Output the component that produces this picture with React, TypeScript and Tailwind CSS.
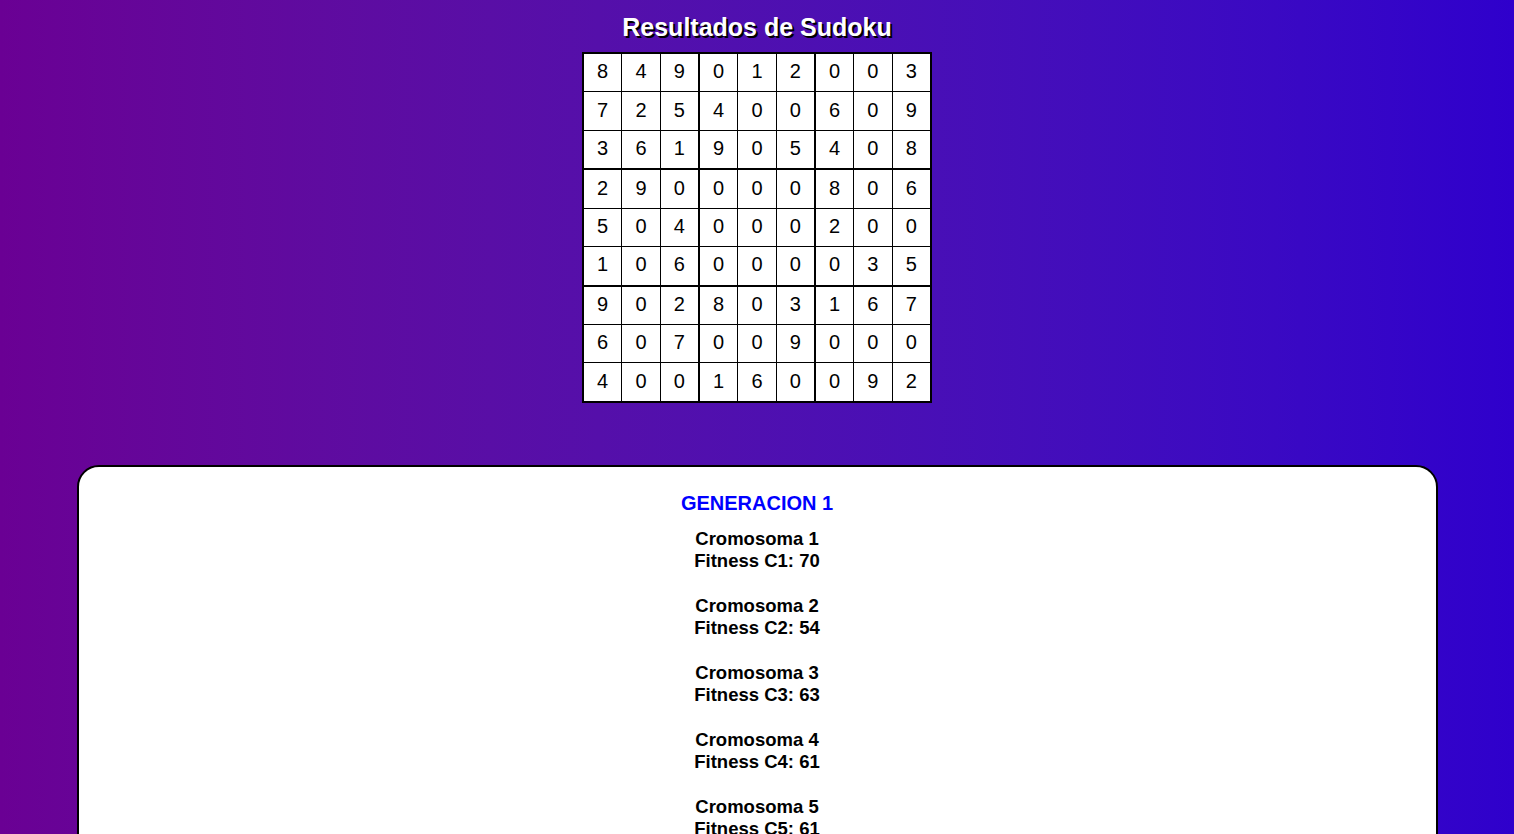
const board: number[][] = [
  [8, 4, 9, 0, 1, 2, 0, 0, 3],
  [7, 2, 5, 4, 0, 0, 6, 0, 9],
  [3, 6, 1, 9, 0, 5, 4, 0, 8],
  [2, 9, 0, 0, 0, 0, 8, 0, 6],
  [5, 0, 4, 0, 0, 0, 2, 0, 0],
  [1, 0, 6, 0, 0, 0, 0, 3, 5],
  [9, 0, 2, 8, 0, 3, 1, 6, 7],
  [6, 0, 7, 0, 0, 9, 0, 0, 0],
  [4, 0, 0, 1, 6, 0, 0, 9, 2],
];

const cromosomas = [
  { id: 1, fitness: 70 },
  { id: 2, fitness: 54 },
  { id: 3, fitness: 63 },
  { id: 4, fitness: 61 },
  { id: 5, fitness: 61 },
];

function cellClass(r: number, c: number) {
  const right = c === 2 || c === 5 ? "border-r-2" : "";
  const bottom = r === 2 || r === 5 ? "border-b-2" : "";
  return `border border-black text-center align-middle p-0 pb-[3px] ${right} ${bottom}`;
}

export default function App() {
  return (
    <div
      className="min-h-[834px] w-full bg-gradient-to-r from-[#6a0094] to-[#2f00cc] pt-[12px] pb-10"
      style={{ fontFamily: '"Liberation Sans", Arial, sans-serif' }}
    >
      <h1 className="text-center text-[25px] font-bold leading-[30px] text-white [text-shadow:2px_2px_0_#000]">
        Resultados de Sudoku
      </h1>

      <table className="mx-auto mt-[10px] h-[351px] w-[350px] table-fixed border-collapse border-2 border-black bg-white text-[20px] text-black">
        <tbody>
          {board.map((row, r) => (
            <tr key={r}>
              {row.map((n, c) => (
                <td key={c} className={cellClass(r, c)}>
                  {n}
                </td>
              ))}
            </tr>
          ))}
        </tbody>
      </table>

      <section className="mx-auto mt-[62px] w-[1361px] rounded-[22px] border-2 border-black bg-white pt-[23px] pb-6 text-center">
        <h2 className="text-[20px] font-bold leading-[26px] text-[#0000ff]">
          GENERACION 1
        </h2>
        <div className="mt-[12px] flex flex-col gap-[23px]">
          {cromosomas.map((c) => (
            <p key={c.id} className="text-[18.5px] font-bold leading-[22px] text-black">
              Cromosoma {c.id}
              <br />
              Fitness C{c.id}: {c.fitness}
            </p>
          ))}
        </div>
      </section>
    </div>
  );
}
